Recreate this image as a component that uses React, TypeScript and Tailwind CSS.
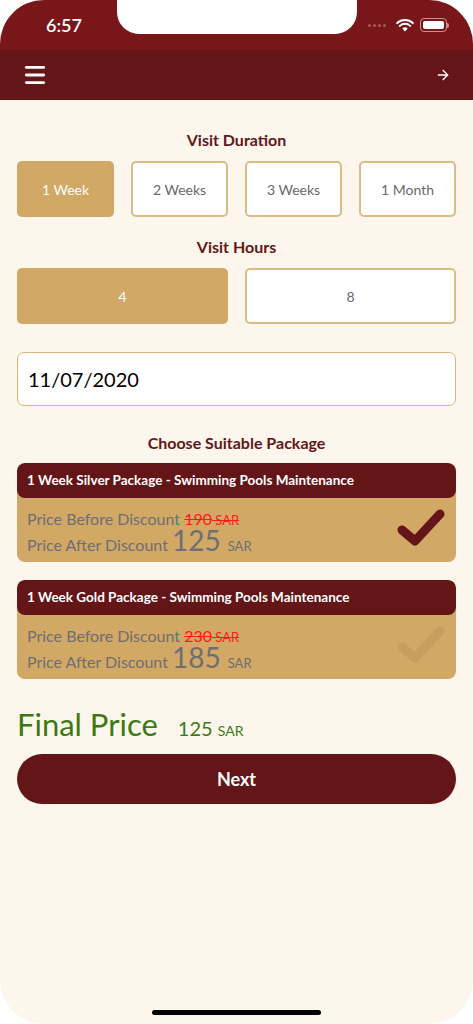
import { Menu, ArrowRight } from 'lucide-react';

const durations = ['1 Week', '2 Weeks', '3 Weeks', '1 Month'];
const hours = ['4', '8'];

const packages = [
  { title: '1 Week Silver Package - Swimming Pools Maintenance', before: '190', after: '125', selected: true },
  { title: '1 Week Gold Package - Swimming Pools Maintenance', before: '230', after: '185', selected: false },
];

function Check({ active }: { active: boolean }) {
  return (
    <svg width="50" height="42" viewBox="0 0 50 42" className="-mt-[6px]">
      <path
        d="M6 24 L19 35 L44 8"
        fill="none"
        stroke={active ? '#631518' : '#c89d5e'}
        strokeWidth="9"
        strokeLinecap="round"
        strokeLinejoin="round"
      />
    </svg>
  );
}

function StatusBar() {
  return (
    <div className="relative h-[50px] bg-[#79161a] flex items-center justify-between px-[46px] pt-1">
      {/* notch */}
      <div className="absolute left-[117px] top-0 w-[240px] h-[34px] bg-white rounded-b-[22px]" />
      <span className="text-white text-[18px] font-semibold -mt-1">6:57</span>
      <div className="flex items-center gap-[6px] -mr-[22px] -mt-1">
        <div className="flex gap-[2px] mr-[4px]">
          <span className="w-[3px] h-[3px] rounded-full bg-[#a45a5c]" />
          <span className="w-[3px] h-[3px] rounded-full bg-[#a45a5c]" />
          <span className="w-[3px] h-[3px] rounded-full bg-[#a45a5c]" />
          <span className="w-[3px] h-[3px] rounded-full bg-[#a45a5c]" />
        </div>
        <svg width="18" height="13" viewBox="0 0 18 13">
          <path d="M9 12.5 L6.3 9.4 A4 4 0 0 1 11.7 9.4 Z" fill="white" />
          <path d="M3.8 6.9 A7.5 7.5 0 0 1 14.2 6.9" stroke="white" strokeWidth="2" fill="none" strokeLinecap="round" />
          <path d="M1.2 4.1 A11.5 11.5 0 0 1 16.8 4.1" stroke="white" strokeWidth="2" fill="none" strokeLinecap="round" />
        </svg>
        <div className="flex items-center">
          <div className="w-[27px] h-[14px] rounded-[4px] border border-[#c88f91] p-[2px]">
            <div className="w-full h-full rounded-[2px] bg-white" />
          </div>
          <div className="w-[2px] h-[5px] bg-[#c88f91] rounded-r" />
        </div>
      </div>
    </div>
  );
}

export default function App() {
  return (
    <div className="bg-white w-[473px] h-[1024px]" style={{ fontFamily: 'Lato, "Noto Sans", sans-serif' }}>
      <div className="relative w-full h-full rounded-[44px] overflow-hidden bg-[#fdf6ec] flex flex-col">
        <StatusBar />
        <div className="h-[50px] bg-[#631518] flex items-center justify-between px-[22px]">
          <Menu className="text-white w-[26px] h-[26px]" strokeWidth={2.6} />
          <ArrowRight className="text-white w-[16px] h-[16px]" strokeWidth={2} />
        </div>

        <div className="flex flex-col px-[17px]">
          <h2 className="text-center text-[#631518] font-bold text-[16px] mt-[30px] leading-[20px]">Visit Duration</h2>
          <div className="grid grid-cols-4 gap-[17px] mt-[11px]">
            {durations.map((d, i) => (
              <div
                key={d}
                className={
                  i === 0
                    ? 'h-[56px] rounded-[5px] bg-[#d1a866] flex items-center justify-center text-white text-[14px]'
                    : 'h-[56px] rounded-[5px] bg-white border-2 border-[#dcbc85] flex items-center justify-center text-[#6a6a6a] text-[14px]'
                }
              >
                {d}
              </div>
            ))}
          </div>

          <h2 className="text-center text-[#631518] font-bold text-[16px] mt-[20px] leading-[20px]">Visit Hours</h2>
          <div className="grid grid-cols-2 gap-[17px] mt-[11px]">
            {hours.map((h, i) => (
              <div
                key={h}
                className={
                  i === 0
                    ? 'h-[56px] rounded-[5px] bg-[#d1a866] flex items-center justify-center text-white text-[14px]'
                    : 'h-[56px] rounded-[5px] bg-white border-2 border-[#dcbc85] flex items-center justify-center text-[#6a6a6a] text-[14px]'
                }
              >
                {h}
              </div>
            ))}
          </div>

          <div className="mt-[28px] h-[54px] rounded-[7px] bg-white border border-[#d6b57a] flex items-center px-[10px] text-[20px] text-black">
            11/07/2020
          </div>

          <h2 className="text-center text-[#631518] font-bold text-[16px] mt-[27px] leading-[20px]">Choose Suitable Package</h2>

          <div className="flex flex-col gap-[18px] mt-[10px]">
            {packages.map((p) => (
              <div key={p.title} className="rounded-[8px] overflow-hidden bg-[#d1a866]">
                <div className="h-[35px] bg-[#631518] rounded-[8px] flex items-center px-[10px] text-white font-bold text-[13.5px]">
                  {p.title}
                </div>
                <div className="h-[64px] flex items-center justify-between pl-[10px] pr-[10px]">
                  <div className="flex flex-col text-[#6f6e72] text-[16px] -mt-[1px]">
                    <div className="h-[20px] leading-[20px]">
                      Price Before Discount{' '}
                      <span className="text-[#ff1a1a] line-through">{p.before}</span>
                      <span className="text-[#ff1a1a] line-through text-[13px]"> SAR</span>
                    </div>
                    <div className="flex items-baseline h-[22px] leading-[22px]">
                      <span>Price After Discount&nbsp;</span>
                      <span className="text-[28px] leading-[22px]">{p.after}</span>
                      <span className="text-[13px] ml-[7px]">SAR</span>
                    </div>
                  </div>
                  <Check active={p.selected} />
                </div>
              </div>
            ))}
          </div>

          <div className="flex items-baseline gap-[20px] mt-[26px] text-[#3b7a12]">
            <span className="text-[31px] leading-[38px]">Final Price</span>
            <span className="text-[20px]">
              125 <span className="text-[14px]">SAR</span>
            </span>
          </div>

          <button className="mt-[11px] h-[50px] rounded-full bg-[#631518] text-white font-bold text-[18px]">
            Next
          </button>
        </div>

        <div className="absolute bottom-[9px] left-[152px] w-[169px] h-[5px] rounded-full bg-black" />
      </div>
    </div>
  );
}
